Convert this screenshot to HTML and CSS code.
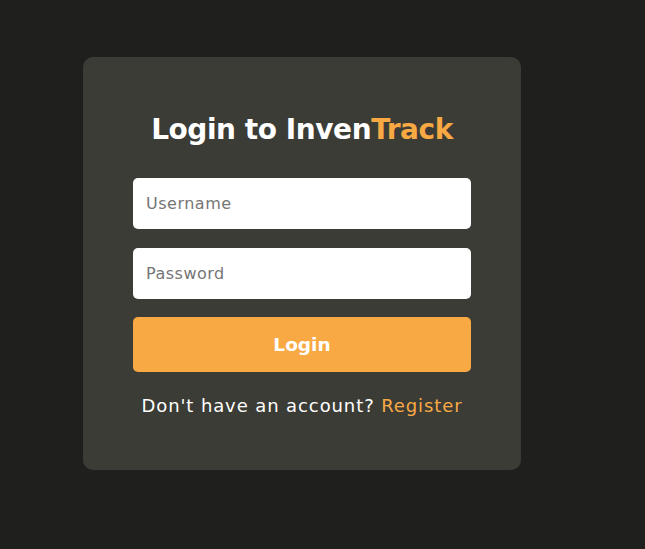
FILE: index.html
```html
<!DOCTYPE html>
<html lang="en">
<head>
<meta charset="utf-8">
<title>Login - InvenTrack</title>
<link rel="stylesheet" href="styles.css">
</head>
<body>
<main class="page">
  <section class="card">
    <h1 class="title">Login to Inven<span class="accent">Track</span></h1>
    <form class="form">
      <input class="field" type="text" placeholder="Username">
      <input class="field" type="password" placeholder="Password">
      <button class="btn" type="button">Login</button>
    </form>
    <p class="footer">Don't have an account? <a class="link" href="#">Register</a></p>
  </section>
</main>
</body>
</html>
```

FILE: styles.css
```css
* { box-sizing: border-box; }
html, body { margin: 0; height: 100%; }
body {
  background: #1f201e;
  font-family: "DejaVu Sans", "Open Sans", sans-serif;
  color: #fff;
}
.page {
  padding: 57px 0 0 83px;
}
.card {
  width: 438px;
  height: 413px;
  background: #3c3c36;
  border-radius: 10px;
  padding: 50px 50px;
}
.title {
  margin: 0 0 25px;
  text-align: center;
  font-size: 28px;
  font-weight: 700;
  line-height: 46px;
  letter-spacing: -0.45px;
}
.accent { color: #f8a944; }
.form {
  display: flex;
  flex-direction: column;
  gap: 19px;
}
.field {
  height: 51px;
  border: none;
  border-radius: 5px;
  background: #fff;
  padding: 0 13px;
  font-family: inherit;
  font-size: 16px;
  letter-spacing: 0.5px;
  color: #333;
  outline: none;
}
.field::placeholder { color: #757575; }
.btn {
  height: 55px;
  margin-top: -1px;
  border: none;
  border-radius: 5px;
  background: #f8a944;
  color: #fff;
  font-family: inherit;
  font-size: 18.5px;
  font-weight: 700;
}
.footer {
  margin: 22px 0 0;
  text-align: center;
  font-size: 18px;
  line-height: 24px;
  letter-spacing: 0.9px;
}
.link { color: #f8a944; text-decoration: none; }
```
